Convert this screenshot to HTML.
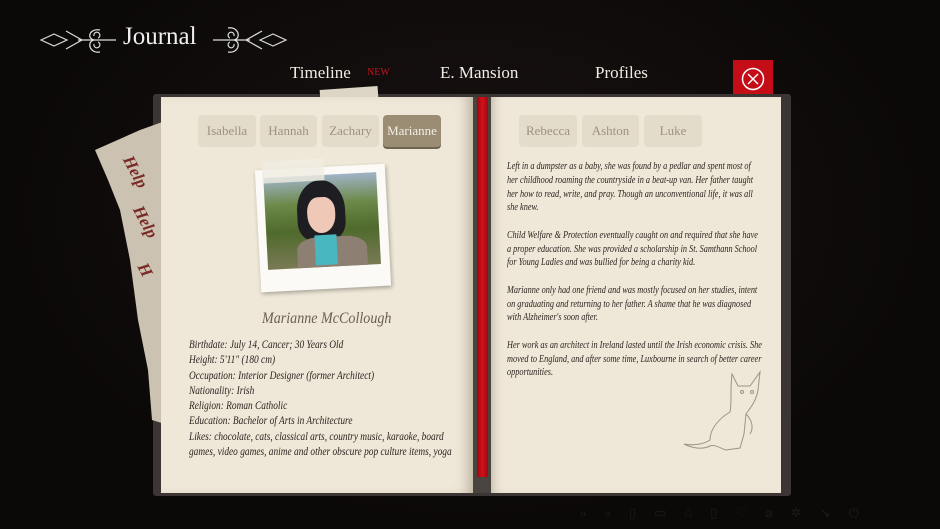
<!DOCTYPE html>
<html><head><meta charset="utf-8"><style>
*{margin:0;padding:0;box-sizing:border-box}
body{width:940px;height:529px;overflow:hidden;background:#0a0707;position:relative;font-family:"Liberation Serif",serif}
.abs{position:absolute}
.nav{color:#f1ece3;font-size:17px}
.tab{position:absolute;height:32px;top:115px;background:#e4dccb;border-radius:4px;color:#9c9282;font-size:13px;text-align:center;line-height:32px}
.txt{font-family:"Liberation Serif",serif;font-style:italic;color:#2a2420;white-space:nowrap;transform-origin:top left}
</style></head><body>
<div class="abs" style="left:0;top:0;width:940px;height:529px;background:radial-gradient(ellipse at 50% 40%,#1a1412 0%,#0b0808 70%)"></div>
<svg class="abs" style="left:38px;top:22px" width="252" height="36" viewBox="0 0 252 36" fill="none" stroke="#ddd" stroke-width="1.2">
<path d="M3 18 L16 12 L29 18 L16 24 Z"/><path d="M28 9 L44 18 L28 27"/><path d="M40 18 H78"/>
<path d="M62 8 C52 6 48 16 56 18 C48 20 52 32 62 30 M56 14 a3 3 0 1 1 4 2 M56 22 a3 3 0 1 0 4 -2"/>
<path d="M175 18 H212"/><path d="M190 6 C200 4 204 16 196 18 C204 20 200 32 190 30 M196 14 a3 3 0 1 0 -4 2 M196 22 a3 3 0 1 1 -4 -2"/>
<path d="M224 9 L208 18 L224 27"/><path d="M222 18 L235 12 L248 18 L235 24 Z"/>
</svg>
<div class="abs" style="left:123px;top:23px;color:#eee;font-size:25px">Journal</div>
<div class="abs nav" style="left:290px;top:63px">Timeline</div>
<div class="abs" style="left:367px;top:67px;color:#c0121a;font-size:10px">NEW</div>
<div class="abs nav" style="left:440px;top:63px">E. Mansion</div>
<div class="abs nav" style="left:595px;top:63px">Profiles</div>
<div class="abs" style="left:733px;top:60px;width:40px;height:37px;background:#c40d16"></div>
<svg class="abs" style="left:741px;top:67px" width="24" height="24" viewBox="0 0 24 24" fill="none" stroke="#fff" stroke-width="1.5"><circle cx="12" cy="12" r="10.5"/><path d="M7 7 L17 17 M17 7 L7 17"/></svg>
<div class="abs" style="left:153px;top:94px;width:638px;height:402px;background:#3b3633;border-radius:3px"></div>
<div class="abs" style="left:320px;top:88px;width:58px;height:12px;background:#ddd6c6;transform:rotate(-4deg)"></div>
<!-- torn note -->
<svg class="abs" style="left:90px;top:120px" width="80" height="310" viewBox="0 0 80 310"><path d="M5 30 L50 10 L78 0 L78 305 L62 300 L58 250 L48 200 L40 140 L30 90 L18 60 Z" fill="#cbc2b1"/></svg>
<div class="abs" style="left:112px;top:140px;width:70px;height:200px;color:#7a2a26;font-style:italic;font-weight:bold;font-size:17px">
<div style="position:absolute;left:6px;top:22px;transform:rotate(62deg)">Help</div>
<div style="position:absolute;left:16px;top:72px;transform:rotate(62deg)">Help</div>
<div style="position:absolute;left:26px;top:120px;transform:rotate(62deg)">H</div>
</div>
<div class="abs" style="left:161px;top:97px;width:314px;height:396px;background:#efe8d8;box-shadow:inset -14px 0 14px -8px rgba(80,60,40,.35)"></div>
<div class="abs" style="left:489px;top:97px;width:292px;height:396px;background:#efe8d8;box-shadow:inset 10px 0 10px -6px rgba(80,60,40,.3)"></div>
<div class="abs" style="left:473px;top:97px;width:18px;height:396px;background:#4a4440"></div>
<div class="abs" style="left:477px;top:97px;width:11px;height:380px;background:linear-gradient(90deg,#a0060e,#d21018,#a0060e)"></div>
<div class="tab" style="left:198px;width:58px">Isabella</div>
<div class="tab" style="left:260px;width:57px">Hannah</div>
<div class="tab" style="left:322px;width:57px">Zachary</div>
<div class="tab" style="left:383px;width:58px;background:#9a8d74;color:#f3eee4;box-shadow:0 2px 0 #6e644f">Marianne</div>
<div class="tab" style="left:519px;width:58px">Rebecca</div>
<div class="tab" style="left:582px;width:57px">Ashton</div>
<div class="tab" style="left:644px;width:58px">Luke</div>
<div class="abs" style="left:258px;top:167px;width:130px;height:122px;background:#fbfaf7;transform:rotate(-3deg);box-shadow:1px 2px 4px rgba(0,0,0,.3)">
 <div style="position:absolute;left:8px;top:8px;width:113px;height:92px;background:linear-gradient(180deg,#9fb3c8 0%,#6d8a4a 30%,#4f6a2c 60%,#7a7a55 100%);overflow:hidden">
  <div style="position:absolute;left:32px;top:5px;width:48px;height:60px;background:#1e1e22;border-radius:50% 50% 30% 30%"></div>
  <div style="position:absolute;left:42px;top:22px;width:28px;height:36px;background:#f0c8b8;border-radius:40% 40% 50% 50%"></div>
  <div style="position:absolute;left:30px;top:62px;width:70px;height:40px;background:#8d7f72;border-radius:30% 30% 0 0"></div>
  <div style="position:absolute;left:48px;top:60px;width:22px;height:30px;background:#49b7c0"></div>
 </div>
</div>
<div class="abs" style="left:262px;top:160px;width:62px;height:22px;background:rgba(240,236,225,.8);transform:rotate(-3deg)"></div>
<div class="abs txt" style="left:262px;top:310px;font-size:16px;color:#6a5e50;transform:scaleX(.88)">Marianne McCollough</div>
<div class="abs txt" style="left:189px;top:337px;font-size:12px;line-height:15.3px;transform:scaleX(.78)">Birthdate: July 14, Cancer; 30 Years Old<br>Height: 5'11" (180 cm)<br>Occupation: Interior Designer (former Architect)<br>Nationality: Irish<br>Religion: Roman Catholic<br>Education: Bachelor of Arts in Architecture<br>Likes: chocolate, cats, classical arts, country music, karaoke, board<br>games, video games, anime and other obscure pop culture items, yoga</div>
<div class="abs txt" style="left:507px;top:160px;font-size:10.5px;line-height:13.75px;transform:scaleX(.785)">Left in a dumpster as a baby, she was found by a pedlar and spent most of<br>her childhood roaming the countryside in a beat-up van. Her father taught<br>her how to read, write, and pray. Though an unconventional life, it was all<br>she knew.<br><br>Child Welfare &amp; Protection eventually caught on and required that she have<br>a proper education. She was provided a scholarship in St. Samthann School<br>for Young Ladies and was bullied for being a charity kid.<br><br>Marianne only had one friend and was mostly focused on her studies, intent<br>on graduating and returning to her father. A shame that he was diagnosed<br>with Alzheimer's soon after.<br><br>Her work as an architect in Ireland lasted until the Irish economic crisis. She<br>moved to England, and after some time, Luxbourne in search of better career<br>opportunities.</div>
<svg class="abs" style="left:680px;top:368px" width="90" height="90" viewBox="0 0 90 90" fill="none" stroke="#9a9488" stroke-width="1"><path d="M52 6 L58 18 L70 18 L80 4 L78 22 C76 34 70 40 66 46 L64 66 L60 80 L46 82 C40 80 34 76 30 78 C22 82 12 80 4 76 C14 78 24 76 30 72 C30 60 40 50 50 44 C52 34 50 20 52 6Z"/><path d="M66 46 C72 52 74 60 70 66"/><circle cx="62" cy="24" r="1.5"/><circle cx="72" cy="24" r="1.5"/></svg>
<div class="abs" style="left:580px;top:505px;width:340px;height:16px;color:#1e1a18;font-size:13px;letter-spacing:18px">»»▯▭⌂▯♡⌀✲↘⏻</div>
</body></html>
